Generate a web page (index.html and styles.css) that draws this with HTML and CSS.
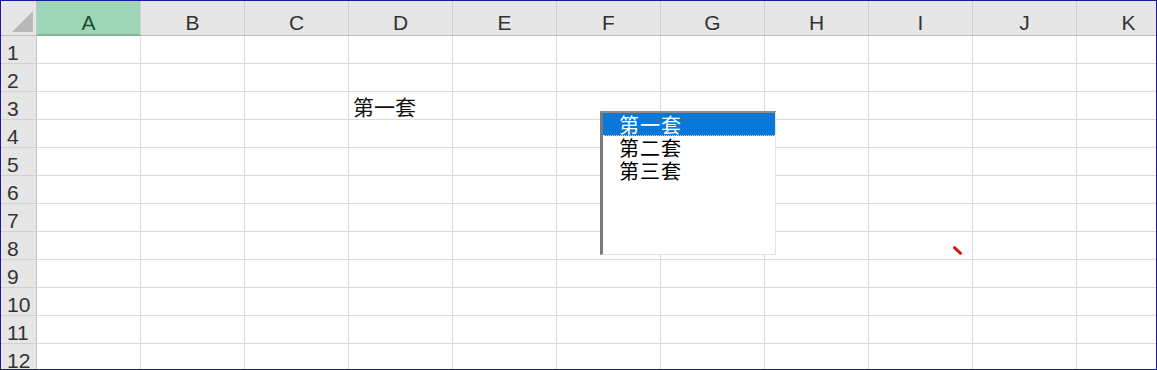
FILE: index.html
```html
<!DOCTYPE html>
<html lang="zh-CN">
<head>
  <meta charset="UTF-8" />
  <title>Sheet1</title>
  <link rel="stylesheet" href="styles.css">
</head>
<body>
  <div class="frame">
    <div class="sheet">
      <div class="corner"><svg width="35" height="34" viewBox="0 0 35 34"><polygon points="32,10 32,31 11,31" fill="#b9b9b9"/></svg></div>
      <div class="col-head active">A</div>
      <div class="col-head">B</div>
      <div class="col-head">C</div>
      <div class="col-head">D</div>
      <div class="col-head">E</div>
      <div class="col-head">F</div>
      <div class="col-head">G</div>
      <div class="col-head">H</div>
      <div class="col-head">I</div>
      <div class="col-head">J</div>
      <div class="col-head">K</div>
    </div>
    <div class="sheet body" id="rows"></div>

    <div class="listbox">
      <div class="item selected">第一套</div>
      <div class="item">第二套</div>
      <div class="item">第三套</div>
    </div>
    <div class="pen-mark"></div>
  </div>

  <script>
    const rows = document.getElementById('rows');
    for (let r = 1; r <= 12; r++) {
      const head = document.createElement('div');
      head.className = 'row-head';
      head.innerText = r;
      rows.appendChild(head);
      for (let c = 0; c < 11; c++) {
        const cell = document.createElement('div');
        cell.className = 'cell';
        if (r === 3 && c === 3) cell.innerText = '第一套';
        rows.appendChild(cell);
      }
    }
  </script>
</body>
</html>
```

FILE: styles.css
```css
body {
  margin: 0;
  background: #fff;
}

.frame {
  position: relative;
  width: 1157px;
  height: 370px;
  box-sizing: border-box;
  border: 1px solid #1b1b9a;
  overflow: hidden;
  font-family: "Liberation Sans", Arial, sans-serif;
  color: #222;
}

.sheet {
  display: grid;
  grid-template-columns: 36px repeat(11, 104px);
  grid-auto-rows: 35px;
}

.sheet.body {
  grid-auto-rows: 28px;
}

.corner {
  background: #e6e6e6;
  border-right: 1px solid #c6c6c6;
  border-bottom: 1px solid #bdbdbd;
  box-sizing: border-box;
}

.corner svg {
  display: block;
}

.col-head {
  background: #e6e6e6;
  border-right: 1px solid #d0d0d0;
  border-bottom: 1px solid #bdbdbd;
  box-sizing: border-box;
  font-size: 21px;
  text-align: center;
  padding-top: 10px;
  color: #333;
}

.col-head.active {
  background: #9fd5b7;
  border-bottom: 2px solid #86b59a;
  color: #1e4d33;
}

.row-head {
  background: #e6e6e6;
  border-right: 1px solid #c6c6c6;
  border-bottom: 1px solid #d0d0d0;
  box-sizing: border-box;
  font-size: 21px;
  padding-left: 6px;
  padding-top: 5px;
  line-height: 23px;
  color: #333;
}

.cell {
  border-right: 1px solid #dadada;
  border-bottom: 1px solid #dadada;
  box-sizing: border-box;
  font-family: "Noto Sans CJK SC", sans-serif;
  font-size: 21px;
  line-height: 28px;
  padding-left: 4px;
  color: #111;
}

.listbox {
  position: absolute;
  left: 599px;
  top: 110px;
  width: 176px;
  height: 144px;
  box-sizing: border-box;
  background: #fff;
  border-top: 2px solid #8c8c8c;
  border-left: 3px solid #7a7a7a;
  border-right: 1px solid #e3e3e3;
  border-bottom: 1px solid #e3e3e3;
  font-family: "Noto Sans CJK SC", sans-serif;
}

.item {
  height: 23px;
  line-height: 23px;
  font-size: 20px;
  letter-spacing: 1px;
  padding-left: 16px;
  color: #000;
}

.item.selected {
  background: #0a78d8;
  color: #fff;
  border-bottom: 1px dotted #e9d9b0;
  height: 22px;
}

.pen-mark {
  position: absolute;
  left: 951px;
  top: 248px;
  width: 11px;
  height: 3px;
  background: #d11a1a;
  transform: rotate(42deg);
  border-radius: 1px;
}
```
